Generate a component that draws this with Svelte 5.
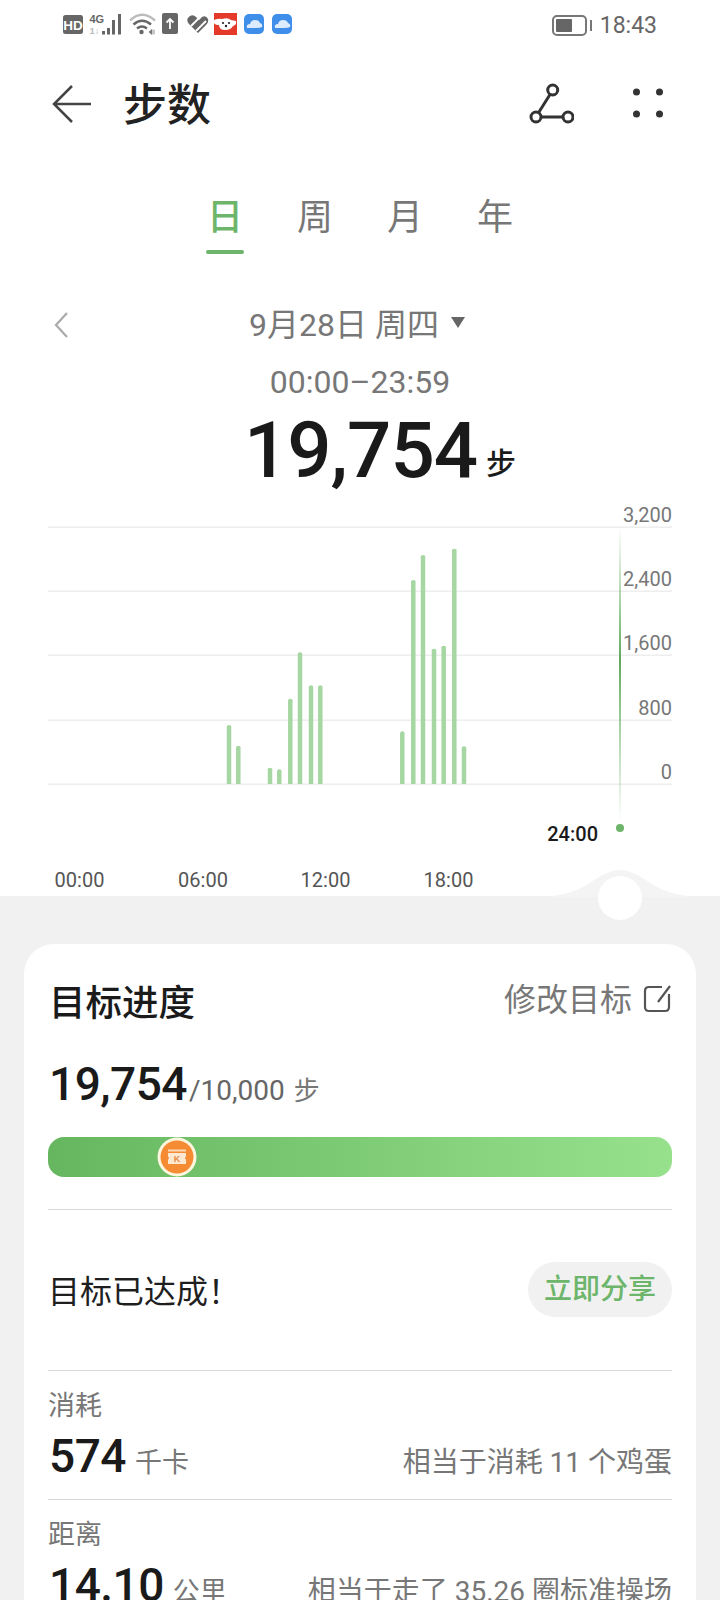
<script>
  const bars = [
    [229, 725], [238.3, 745.7], [270, 767.7], [279.3, 769.3], [290.3, 698.7],
    [300, 652.3], [311, 685.3], [320.3, 685.3], [402.3, 731.3], [413.3, 580],
    [423, 555], [434, 648.7], [443.7, 645.7], [454.3, 548.7], [464, 746.3],
  ];
  const grid = [
    { y: 527, label: '3,200' },
    { y: 591, label: '2,400' },
    { y: 655, label: '1,600' },
    { y: 720, label: '800' },
    { y: 784, label: '0' },
  ];
  const hours = [
    { x: 79.5, label: '00:00' },
    { x: 203, label: '06:00' },
    { x: 325.5, label: '12:00' },
    { x: 448.5, label: '18:00' },
  ];
  const tabs = ['日', '周', '月', '年'];
  // chart svg starts at y=500 on the page
  const top = 500;
</script>

<div class="page">
  <div class="status">
    <svg class="status-icons" width="240" height="30" viewBox="60 10 240 30">
      <rect x="63" y="15" width="20" height="19" rx="2.5" fill="#666" />
      <text x="73" y="29.500" class="hd">HD</text>
      <text x="89.500" y="23" class="net">4G</text>
      <text x="89.500" y="34" class="net faint">1↓</text>
      <rect x="102" y="31" width="3" height="3.500" fill="#666" />
      <rect x="107" y="28" width="3" height="6.500" fill="#666" />
      <rect x="112" y="20" width="3" height="14.500" fill="#666" />
      <rect x="118" y="14" width="3" height="20.500" fill="#666" />
      <path d="M130 20.500 Q142 9 155 20.500" fill="none" stroke="#bbb" stroke-width="2.400" />
      <path d="M133.500 24.500 Q142 17 151 24.500" fill="none" stroke="#666" stroke-width="2.400" />
      <path d="M137 28.500 Q142 24.500 147 28.500" fill="none" stroke="#666" stroke-width="2.400" />
      <circle cx="141.500" cy="32" r="2.200" fill="#666" />
      <path d="M149 32 L152 29.500 V34.500 Z M154 29.500 V34.500" fill="#777" stroke="#777" stroke-width="0.800" />
      <rect x="162" y="13" width="16" height="21" rx="2" fill="#666" />
      <path d="M170 29 V19 M166.500 22.500 L170 19 L173.500 22.500" fill="none" stroke="#fff" stroke-width="1.800" />
      <path d="M198 33 L189 24 Q185 19 190 16 Q193 14 196 17 L199 20 L202 17 Q206 15 208 19 Q209 22 206 25 Z" fill="#666" />
      <path d="M191 26 L200 17 M196 31 L206 21" stroke="#fff" stroke-width="1.800" />
      <rect x="214" y="13" width="23" height="22" fill="#e5392a" />
      <path d="M214 20 Q219 18 222 19 Q228 17 231 20 L236 21 Q237 25 233 26 Q231 30 225 30 Q219 30 219 25 Q215 25 214 23 Z" fill="#fff" />
      <circle cx="223" cy="23" r="1.100" fill="#222" />
      <circle cx="229" cy="23" r="1.100" fill="#222" />
      <circle cx="226" cy="26" r="1.200" fill="#222" />
      <rect x="244" y="14" width="20" height="20" rx="5" fill="#3f8eea" />
      <path d="M247 28 Q246 24 250 24 Q251 20 255 20 Q259 20 260 23 Q263 24 262 27 Q260 28 256 28 Z" fill="#dcecfd" />
      <rect x="272" y="14" width="20" height="20" rx="5" fill="#3f8eea" />
      <path d="M275 28 Q274 24 278 24 Q279 20 283 20 Q287 20 288 23 Q291 24 290 27 Q288 28 284 28 Z" fill="#dcecfd" />
    </svg>
    <div class="status-right">
      <div class="battery"><div class="battery-fill"></div></div>
      <div class="battery-nub"></div>
      <span class="clock">18:43</span>
    </div>
  </div>

  <div class="header">
    <svg class="back" width="40" height="38" viewBox="0 0 40 38" fill="none" stroke="#444" stroke-width="2.500">
      <path d="M39 19 H2 M20 1 L2 19 L20 37" />
    </svg>
    <h1 class="title">步数</h1>
    <svg class="share" width="46" height="42" viewBox="528 82 46 42" fill="none" stroke="#333" stroke-width="3">
      <circle cx="552.7" cy="90" r="5" />
      <circle cx="536" cy="117" r="5" />
      <circle cx="568" cy="117" r="5" />
      <path d="M550 94.500 L538.500 112.700 M541 117 H563" />
    </svg>
    <svg class="more" width="32" height="32" viewBox="0 0 32 32" fill="#333">
      <circle cx="4.500" cy="5" r="3.500" />
      <circle cx="27.500" cy="5" r="3.500" />
      <circle cx="4.500" cy="27" r="3.500" />
      <circle cx="27.500" cy="27" r="3.500" />
    </svg>
  </div>

  <div class="tabs">
    {#each tabs as tab, i}
      <div class="tab" class:active={i === 0}>{tab}</div>
    {/each}
  </div>

  <div class="date-row">
    <svg class="chevron" width="16" height="26" viewBox="0 0 16 26" fill="none" stroke="#aaa" stroke-width="2.200">
      <path d="M14 1 L3 13 L14 25" />
    </svg>
    <span class="date">9月28日 周四</span>
    <span class="caret"></span>
  </div>

  <div class="time">00:00–23:59</div>

  <div class="total">
    <span class="total-num">19,754</span>
    <span class="total-unit">步</span>
  </div>

  <svg class="chart" width="720" height="396" viewBox="0 {top} 720 396">
    <defs>
      <linearGradient id="cursor" x1="0" y1="0" x2="0" y2="1">
        <stop offset="0" stop-color="#6db56a" stop-opacity="0" />
        <stop offset="0.45" stop-color="#5fa85c" />
        <stop offset="1" stop-color="#6db56a" stop-opacity="0" />
      </linearGradient>
    </defs>
    {#each grid as g}
      <rect x="48" y={g.y - 0.5} width="624" height="1.500" fill="#eeeeee" />
      <text x="672" y={g.y - 5} class="axis" text-anchor="end">{g.label}</text>
    {/each}
    {#each bars as b}
      <path d="M{b[0] - 2.25} 784 V{b[1] + 1.5} Q{b[0] - 2.25} {b[1]} {b[0]} {b[1]} Q{b[0] + 2.25} {b[1]} {b[0] + 2.25} {b[1] + 1.5} V784 Z" fill="#a6d6a2" />
    {/each}
    <rect x="619" y="527" width="2" height="295" fill="url(#cursor)" />
    <circle cx="620" cy="828" r="4" fill="#6cb56a" />
    <text x="598" y="841" class="now" text-anchor="end">24:00</text>
    {#each hours as h}
      <text x={h.x} y="887" class="hour" text-anchor="middle">{h.label}</text>
    {/each}
  </svg>

  <div class="sheet">
    <svg class="bump" width="160" height="28" viewBox="0 0 160 28">
      <path d="M0 28 Q30 27 50 14 Q68 1 80 1 Q92 1 110 14 Q130 27 160 28 Z" fill="#f4f4f4" />
    </svg>
    <div class="knob"></div>

    <div class="card">
      <div class="card-head">
        <h2 class="card-title">目标进度</h2>
        <div class="edit">
          <span>修改目标</span>
          <svg width="28" height="28" viewBox="0 0 28 28" fill="none" stroke="#555" stroke-width="2.200">
            <path d="M19 2 H6 Q2 2 2 6 V22 Q2 26 6 26 H22 Q26 26 26 22 V9" />
            <path d="M15 17 L27 1" />
          </svg>
        </div>
      </div>

      <div class="progress-nums">
        <span class="big">19,754</span><span class="of">/10,000</span><span class="of-unit">步</span>
      </div>

      <div class="bar">
        <svg class="badge" width="40" height="40" viewBox="0 0 40 40">
          <circle cx="20" cy="20" r="19.500" fill="#fdf6df" />
          <circle cx="20" cy="20" r="16.500" fill="#f58b32" />
          <path d="M11 12.500 H29 V14.500 H11 Z" fill="#fbd9b5" />
          <path d="M11 16 H29 V19.500 Q27 21 29 22.500 V27 H11 V22.500 Q13 21 11 19.500 Z" fill="#fde8d2" />
          <text x="20" y="25" class="ticket">K</text>
        </svg>
      </div>

      <div class="achieved">
        <span class="achieved-text">目标已达成！</span>
        <span class="share-btn">立即分享</span>
      </div>

      <div class="stat">
        <div class="stat-label">消耗</div>
        <div class="stat-row">
          <span class="big">574</span>
          <span class="stat-unit">千卡</span>
          <span class="stat-note">相当于消耗 11 个鸡蛋</span>
        </div>
      </div>

      <div class="stat">
        <div class="stat-label">距离</div>
        <div class="stat-row">
          <span class="big">14.10</span>
          <span class="stat-unit">公里</span>
          <span class="stat-note">相当于走了 35.26 圈标准操场</span>
        </div>
      </div>
    </div>
  </div>
</div>

<style>
  :global(body) { margin: 0; background: #fff; }

  .page {
    width: 720px;
    height: 1600px;
    overflow: hidden;
    background: #fff;
    font-family: Roboto, "Noto Sans CJK SC", sans-serif;
    color: #1a1a1a;
  }

  /* status bar */
  .status {
    height: 50px;
    display: flex;
    align-items: flex-start;
    justify-content: space-between;
    padding: 10px 63px 0 60px;
    box-sizing: border-box;
  }
  .status-icons { display: block; }
  .hd { font: 700 13.500px "Liberation Sans", sans-serif; fill: #fff; text-anchor: middle; }
  .net { font: 700 11px "Liberation Sans", sans-serif; fill: #666; }
  .net.faint { font-size: 9.500px; fill: #bbb; }
  .status-right { display: flex; align-items: center; height: 30px; }
  .battery {
    width: 35px;
    height: 21px;
    box-sizing: border-box;
    border: 2px solid #777;
    border-radius: 5px;
    padding: 2px;
  }
  .battery-fill { width: 16px; height: 100%; background: #666; border-radius: 1px; }
  .battery-nub { width: 2px; height: 11px; background: #777; margin: 0 8px 0 3px; }
  .clock { font-size: 23px; color: #666; }

  /* header */
  .header {
    height: 108px;
    display: flex;
    align-items: center;
    padding: 0 57px 0 52px;
  }
  .back { margin-right: 31px; }
  .title { margin: 4px 0 0; font-size: 44px; font-weight: 500; line-height: 1; color: #222; flex: 1; }
  .share { margin-right: 58px; margin-top: -2px; }
  .more { margin-top: -2px; margin-right: -1px; }

  /* tabs */
  .tabs {
    height: 64px;
    margin-top: 32px;
    display: flex;
    justify-content: center;
  }
  .tab {
    width: 90px;
    height: 64px;
    box-sizing: border-box;
    font-size: 36px;
    line-height: 56px;
    text-align: center;
    color: #777;
    position: relative;
  }
  .tab.active { color: #6cb56a; font-weight: 500; }
  .tab.active::after {
    content: '';
    position: absolute;
    left: 26px;
    right: 26px;
    bottom: 0;
    height: 4px;
    border-radius: 2px;
    background: #6cb56a;
  }

  /* date */
  .date-row {
    height: 40px;
    margin-top: 51px;
    display: flex;
    align-items: center;
    justify-content: center;
    padding-right: 6px;
    position: relative;
    color: #777;
  }
  .chevron { position: absolute; left: 53px; top: 7px; }
  .date { font-size: 32px; line-height: 40px; }
  .caret {
    width: 0;
    height: 0;
    margin: -6px 0 0 12px;
    border-left: 7px solid transparent;
    border-right: 7px solid transparent;
    border-top: 11px solid #666;
  }

  .time {
    height: 40px;
    margin-top: 17px;
    text-align: center;
    font-size: 32px;
    line-height: 40px;
    color: #777;
  }

  .total {
    height: 98px;
    display: flex;
    align-items: baseline;
    justify-content: center;
    padding-left: 40px;
    box-sizing: border-box;
    line-height: 98px;
  }
  .total-num { font-size: 78px; font-weight: 500; letter-spacing: -1px; color: #1a1a1a; }
  .total-unit { font-size: 30px; font-weight: 500; margin-left: 9px; transform: translateY(-3px); }

  .chart { display: block; }
  .axis { font-size: 20px; fill: #777; }
  .now { font-size: 20px; font-weight: 500; fill: #1a1a1a; }
  .hour { font-size: 20px; fill: #555; }

  /* lower sheet */
  .sheet {
    position: relative;
    background: #f1f1f1;
    padding: 48px 24px 0;
    height: 704px;
    box-sizing: border-box;
  }
  .bump { position: absolute; left: 540px; top: -27px; }
  .knob {
    position: absolute;
    left: 598px;
    top: -20px;
    width: 44px;
    height: 44px;
    border-radius: 50%;
    background: #fff;
  }
  .card {
    background: #fff;
    border-radius: 30px 30px 0 0;
    padding: 0 24px;
    height: 660px;
  }
  .card-head {
    height: 120px;
    display: flex;
    justify-content: space-between;
    align-items: flex-start;
    padding-top: 37px;
    box-sizing: border-box;
  }
  .card-title { margin: 0; font-size: 36.500px; font-weight: 500; line-height: 46px; padding-left: 1px; }
  .edit { display: flex; align-items: center; gap: 11px; color: #777; font-size: 32px; line-height: 36px; padding-top: 1px; }
  .edit svg { margin: -3px 1px 0 0; }

  .progress-nums {
    height: 52px;
    display: flex;
    align-items: baseline;
    line-height: 52px;
    padding-left: 1px;
    margin-top: -6px;
  }
  .big { font-size: 46px; font-weight: 500; letter-spacing: -0.500px; color: #1a1a1a; }
  .of { font-size: 28px; color: #666; margin-left: 2px; }
  .of-unit { font-size: 26px; color: #777; margin-left: 9px; }

  .bar {
    height: 40px;
    margin-top: 27px;
    border-radius: 16px;
    background: linear-gradient(90deg, #66b660, #97e18d);
    position: relative;
  }
  .badge { position: absolute; left: 109px; top: 0; }
  .ticket { font: 700 9px "Liberation Sans", sans-serif; fill: #e88a3e; text-anchor: middle; }

  .achieved {
    height: 162px;
    margin-top: 32px;
    box-sizing: border-box;
    border-top: 1.500px solid #d8d8d8;
    border-bottom: 1.500px solid #d8d8d8;
    display: flex;
    align-items: center;
    justify-content: space-between;
    padding-bottom: 2px;
  }
  .achieved-text { font-size: 32px; color: #1f1f1f; letter-spacing: 0; }
  .share-btn {
    width: 144px;
    height: 55px;
    border-radius: 28px;
    background: #f1f1f1;
    color: #6cb56a;
    font-size: 28px;
    font-weight: 500;
    line-height: 55px;
    text-align: center;
  }

  .stat {
    height: 129px;
    box-sizing: border-box;
    border-bottom: 1.500px solid #d8d8d8;
    padding-top: 17px;
  }
  .stat-label { font-size: 27px; line-height: 36px; color: #777; }
  .stat-row {
    display: flex;
    align-items: baseline;
    line-height: 52px;
    margin-top: 6px;
    padding-left: 1px;
  }
  .stat-unit { font-size: 27px; color: #777; margin-left: 9px; flex: 1; }
  .stat-note { font-size: 28px; color: #777; }
</style>
